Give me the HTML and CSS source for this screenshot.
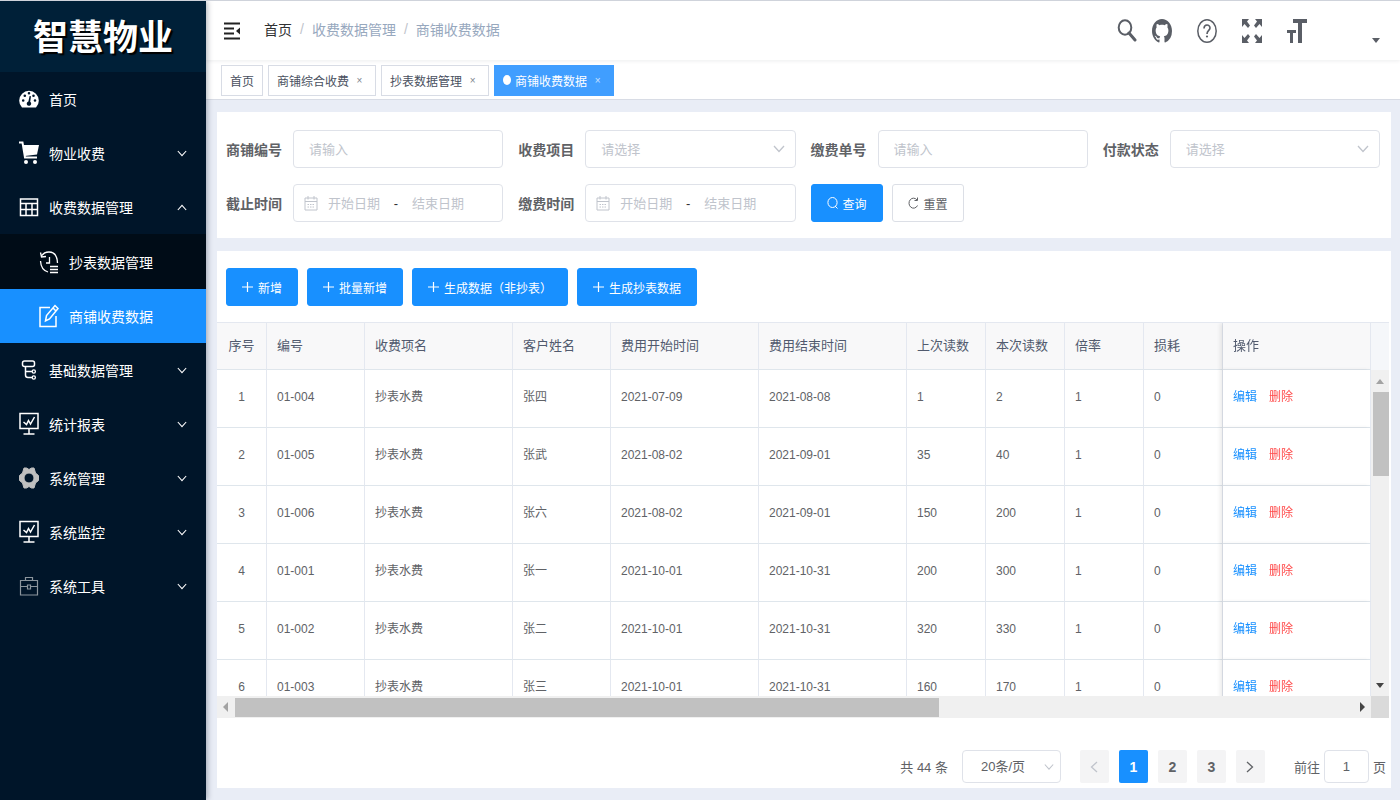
FILE: index.html
```html
<!DOCTYPE html>
<html lang="zh-CN">
<head>
  <meta charset="UTF-8">
  <meta name="viewport" content="width=device-width, initial-scale=1.0">
  <title>智慧物业 - 商铺收费数据</title>
  <link rel="stylesheet" href="styles.css">
</head>
<body>
  <!-- shared icons -->
  <svg class="sprite" aria-hidden="true">
    <symbol id="i-down" viewBox="0 0 12 8"><path d="M1 1l5 5.500L11 1" fill="none" stroke="currentColor" stroke-width="1.300"/></symbol>
    <symbol id="i-board" viewBox="0 0 20 24"><path d="M1 1.500h18v15H1zM10 16.500v5.500M4.500 22h11M4.500 10l3 2.500 2-4 2 3.500L15.500 5" fill="none" stroke="currentColor" stroke-width="1.500"/></symbol>
    <symbol id="i-plus" viewBox="0 0 11 12"><path d="M5.500 1v10M0 6h11" stroke="currentColor" stroke-width="1.200"/></symbol>
    <symbol id="i-date" viewBox="0 0 14 16"><path d="M1 3h12v12H1zM1 6.500h12M4 1v3.500M10 1v3.500" fill="none" stroke="currentColor"/><path d="M3.500 9.500h7M3.500 12h7" stroke="currentColor" stroke-dasharray="1.500 1"/></symbol>
  </svg>

  <div class="app">
    <aside class="sidebar">
      <h1 class="logo">智慧物业</h1>
      <nav>
        <ul class="menu">
          <li><a class="menu-item" href="#">
            <svg class="icon" viewBox="0 0 20 20"><path fill="currentColor" fill-rule="evenodd" d="M3 18.500A9.800 9.800 0 1 1 17 18.500zM4.200 10.200a1.300 1.300 0 1 0 0 2.600 1.300 1.300 0 0 0 0-2.600zM5.800 5.500a1.300 1.300 0 1 0 0 2.600 1.300 1.300 0 0 0 0-2.600zM10 3a1.300 1.300 0 1 0 0 2.600A1.300 1.300 0 0 0 10 3zM14.500 5.500a1.300 1.300 0 1 0 0 2.600 1.300 1.300 0 0 0 0-2.600zM16 10.200a1.300 1.300 0 1 0 0 2.600 1.300 1.300 0 0 0 0-2.600zM10.600 7l-1.200 5.500a2.200 2.200 0 1 0 1.800.300L12 7.300z"/></svg>
            <span>首页</span></a></li>
          <li><a class="menu-item" href="#">
            <svg class="icon" viewBox="0 0 20 24"><path d="M0 1.500h3.500L6 16.500h12" fill="none" stroke="currentColor" stroke-width="2"/><path d="M4 4h16l-2 9.500L6 15z" fill="currentColor"/><circle cx="7" cy="21" r="2" fill="currentColor"/><circle cx="16" cy="21" r="2" fill="currentColor"/></svg>
            <span>物业收费</span><svg class="arrow"><use href="#i-down"/></svg></a></li>
          <li>
            <a class="menu-item" href="#">
              <svg class="icon" viewBox="0 0 20 20"><path d="M1.500 2h17v16.500h-17zM1.500 6.500h17M1.500 12.500h17M7 6.500v12M13 6.500v12" fill="none" stroke="currentColor" stroke-width="1.500"/></svg>
              <span>收费数据管理</span><svg class="arrow up"><use href="#i-down"/></svg></a>
            <ul class="submenu">
              <li><a class="menu-item" href="#">
                <svg class="icon" viewBox="0 0 20 24"><path d="M2.500 6Q5 2 10 2q8 0 8.500 11M1.500 11Q2 20 9 22M1.500 2.500l1 4.500 4.500-.5M10.500 7v6H7M11 16.500h8M11 19.500h8M11 22.500h8" fill="none" stroke="currentColor" stroke-width="1.300"/></svg>
                <span>抄表数据管理</span></a></li>
              <li><a class="menu-item active" href="#">
                <svg class="icon" viewBox="0 0 20 24"><path d="M11 3.500H1v19h16V12M6.500 17l1-5.500 8.500-10 3 3-8.500 10.500zM14 4l3 3" fill="none" stroke="currentColor" stroke-width="1.500"/></svg>
                <span>商铺收费数据</span></a></li>
            </ul>
          </li>
          <li><a class="menu-item" href="#">
            <svg class="icon" viewBox="0 0 20 20"><rect x="3.500" y="1" width="12" height="5.500" rx="2" fill="none" stroke="currentColor" stroke-width="1.500"/><path d="M6.500 6.500V15q0 2.500 2.500 2.500h4M6.500 11.500h6.500" fill="none" stroke="currentColor" stroke-width="1.500"/><circle cx="14.800" cy="11.500" r="1.600" fill="none" stroke="currentColor" stroke-width="1.300"/><circle cx="14.800" cy="17.500" r="1.600" fill="none" stroke="currentColor" stroke-width="1.300"/></svg>
            <span>基础数据管理</span><svg class="arrow"><use href="#i-down"/></svg></a></li>
          <li><a class="menu-item" href="#">
            <svg class="icon"><use href="#i-board"/></svg>
            <span>统计报表</span><svg class="arrow"><use href="#i-down"/></svg></a></li>
          <li><a class="menu-item" href="#">
            <svg class="icon gray" viewBox="0 0 20 22"><path fill="currentColor" fill-rule="evenodd" stroke="currentColor" stroke-linejoin="round" d="M5 1h2.500l2.500 1.500L12.500 1H15l1.500 5L19.500 8.500v5L16.500 16 15 21h-2.500L10 19.500 7.500 21H5l-1.500-5L.5 13.500v-5L3.500 6zM10 6a5 5 0 1 0 0 10 5 5 0 0 0 0-10z"/></svg>
            <span>系统管理</span><svg class="arrow"><use href="#i-down"/></svg></a></li>
          <li><a class="menu-item" href="#">
            <svg class="icon"><use href="#i-board"/></svg>
            <span>系统监控</span><svg class="arrow"><use href="#i-down"/></svg></a></li>
          <li><a class="menu-item" href="#">
            <svg class="icon dim" viewBox="0 0 20 20"><path d="M1.500 4.500h17v14.500h-17zM6.500 4.500V1.500h7v3M1.500 10.500H8M12 10.500h6.500M8.500 9h3v4h-3z" fill="none" stroke="currentColor" stroke-width="1.200"/></svg>
            <span>系统工具</span><svg class="arrow"><use href="#i-down"/></svg></a></li>
        </ul>
      </nav>
    </aside>

    <div class="main">
      <header class="navbar">
        <button class="nav-btn fold" aria-label="收起菜单">
          <svg viewBox="0 0 16 18" width="16" height="18"><path d="M0 1.500h16M0 6.500h10M0 11.500h10M0 16.500h16" stroke="currentColor" stroke-width="2"/><path d="M16 5.500v7L12 9z" fill="currentColor"/></svg>
        </button>
        <nav class="breadcrumb">
          <a href="#">首页</a><span class="sep">/</span><span>收费数据管理</span><span class="sep">/</span><span>商铺收费数据</span>
        </nav>
        <div class="tools">
          <button class="nav-btn search" aria-label="搜索">
            <svg viewBox="0 0 20 24"><ellipse cx="8" cy="8.500" rx="6.300" ry="7.300" fill="none" stroke="currentColor" stroke-width="2"/><path d="M12 14l6 7" stroke="currentColor" stroke-width="3" stroke-linecap="round"/></svg>
          </button>
          <button class="nav-btn" aria-label="源码">
            <svg viewBox="0 0 16 16" preserveAspectRatio="none"><path fill="currentColor" d="M8 0C3.580 0 0 3.580 0 8c0 3.540 2.290 6.530 5.470 7.590.4.070.55-.17.55-.38 0-.19-.01-.82-.01-1.490-2.010.37-2.530-.49-2.690-.94-.09-.23-.48-.94-.82-1.130-.28-.15-.68-.52-.01-.53.63-.01 1.080.58 1.230.82.72 1.210 1.870.87 2.330.66.07-.52.28-.87.51-1.070-1.780-.2-3.640-.89-3.640-3.950 0-.87.31-1.590.82-2.150-.08-.2-.36-1.020.08-2.120 0 0 .67-.21 2.200.82.64-.18 1.320-.27 2-.27s1.360.09 2 .27c1.530-1.040 2.200-.82 2.200-.82.44 1.100.16 1.920.08 2.120.51.56.82 1.270.82 2.150 0 3.070-1.870 3.750-3.650 3.950.29.25.54.73.54 1.480 0 1.070-.01 1.930-.01 2.200 0 .21.15.46.55.38A8.010 8.010 0 0 0 16 8c0-4.420-3.580-8-8-8z"/></svg>
          </button>
          <button class="nav-btn" aria-label="帮助">
            <svg viewBox="0 0 20 24"><ellipse cx="10" cy="12" rx="9.200" ry="11.200" fill="none" stroke="currentColor" stroke-width="1.500"/><path d="M7 9.500C7 5 13 5 13 9c0 2.500-3 2.500-3 6" fill="none" stroke="currentColor" stroke-width="1.600"/><circle cx="10" cy="17.500" r="1.100" fill="currentColor"/></svg>
          </button>
          <button class="nav-btn" aria-label="全屏">
            <svg viewBox="0 0 20 24"><path fill="currentColor" d="M0 0h7L5 2.500l3 4L6 9 2.500 5 0 8zM20 0h-7l2 2.500-3 4L14 9l3.500-4L20 8zM0 24h7l-2-2.500 3-4L6 15l-3.500 4L0 16zM20 24h-7l2-2.500-3-4L14 15l3.500 4 2.500-3z"/></svg>
          </button>
          <button class="nav-btn" aria-label="字号">
            <svg viewBox="0 0 20 24"><path fill="currentColor" d="M6 0h14v4h-5v20h-4V4H6zM0 11h9v3H6v10H3V14H0z"/></svg>
          </button>
          <button class="nav-btn caret" aria-label="用户菜单">
            <svg viewBox="0 0 8 5"><path fill="currentColor" d="M0 0h8L4 5z"/></svg>
          </button>
        </div>
      </header>

      <div class="tags">
        <a class="tag" href="#">首页</a>
        <a class="tag" href="#">商铺综合收费<span class="close">×</span></a>
        <a class="tag" href="#">抄表数据管理<span class="close">×</span></a>
        <a class="tag active" href="#">商铺收费数据<span class="close">×</span></a>
      </div>

      <main class="content">
        <form class="card filter">
          <div class="field">
            <label for="shop">商铺编号</label>
            <input class="box" type="text" id="shop" placeholder="请输入">
          </div>
          <div class="field">
            <label for="item">收费项目</label>
            <div class="select">
              <select class="box" id="item"><option>请选择</option></select>
              <svg><use href="#i-down"/></svg>
            </div>
          </div>
          <div class="field">
            <label for="bill">缴费单号</label>
            <input class="box" type="text" id="bill" placeholder="请输入">
          </div>
          <div class="field">
            <label for="status">付款状态</label>
            <div class="select">
              <select class="box" id="status"><option>请选择</option></select>
              <svg><use href="#i-down"/></svg>
            </div>
          </div>
          <div class="field">
            <label for="end-from">截止时间</label>
            <div class="box range">
              <svg><use href="#i-date"/></svg>
              <input type="text" id="end-from" placeholder="开始日期">
              <span>-</span>
              <input type="text" aria-label="截止时间结束" placeholder="结束日期">
            </div>
          </div>
          <div class="field">
            <label for="pay-from">缴费时间</label>
            <div class="box range">
              <svg><use href="#i-date"/></svg>
              <input type="text" id="pay-from" placeholder="开始日期">
              <span>-</span>
              <input type="text" aria-label="缴费时间结束" placeholder="结束日期">
            </div>
          </div>
          <div class="actions">
            <button type="button" class="btn primary"><svg viewBox="0 0 11 12"><ellipse cx="5.500" cy="5.500" rx="4.600" ry="5" fill="none" stroke="currentColor"/><path d="M8 9l2.500 2.500" stroke="currentColor"/></svg>查询</button>
            <button type="button" class="btn"><svg viewBox="0 0 11 12"><path d="M9.500 8.500A4.500 5 0 1 1 9 3M9.500.5v3H6.500" fill="none" stroke="currentColor"/></svg>重置</button>
          </div>
        </form>

        <section class="card">
          <div class="toolbar">
            <button class="btn primary"><svg><use href="#i-plus"/></svg>新增</button>
            <button class="btn primary"><svg><use href="#i-plus"/></svg>批量新增</button>
            <button class="btn primary"><svg><use href="#i-plus"/></svg>生成数据（非抄表）</button>
            <button class="btn primary"><svg><use href="#i-plus"/></svg>生成抄表数据</button>
          </div>

          <div class="table-wrap">
            <div class="table-view">
              <table>
                <colgroup>
                  <col class="w-no"><col class="w-code"><col class="w-long"><col class="w-code"><col class="w-long"><col class="w-long">
                  <col class="w-num"><col class="w-num"><col class="w-num"><col class="w-num"><col class="w-long">
                </colgroup>
                <thead>
                  <tr><th>序号</th><th>编号</th><th>收费项名</th><th>客户姓名</th><th>费用开始时间</th><th>费用结束时间</th><th>上次读数</th><th>本次读数</th><th>倍率</th><th>损耗</th><th>操作</th></tr>
                </thead>
                <tbody>
                  <tr><td>1</td><td>01-004</td><td>抄表水费</td><td>张四</td><td>2021-07-09</td><td>2021-08-08</td><td>1</td><td>2</td><td>1</td><td>0</td><td><button class="link">编辑</button><button class="link danger">删除</button></td></tr>
                  <tr><td>2</td><td>01-005</td><td>抄表水费</td><td>张武</td><td>2021-08-02</td><td>2021-09-01</td><td>35</td><td>40</td><td>1</td><td>0</td><td><button class="link">编辑</button><button class="link danger">删除</button></td></tr>
                  <tr><td>3</td><td>01-006</td><td>抄表水费</td><td>张六</td><td>2021-08-02</td><td>2021-09-01</td><td>150</td><td>200</td><td>1</td><td>0</td><td><button class="link">编辑</button><button class="link danger">删除</button></td></tr>
                  <tr><td>4</td><td>01-001</td><td>抄表水费</td><td>张一</td><td>2021-10-01</td><td>2021-10-31</td><td>200</td><td>300</td><td>1</td><td>0</td><td><button class="link">编辑</button><button class="link danger">删除</button></td></tr>
                  <tr><td>5</td><td>01-002</td><td>抄表水费</td><td>张二</td><td>2021-10-01</td><td>2021-10-31</td><td>320</td><td>330</td><td>1</td><td>0</td><td><button class="link">编辑</button><button class="link danger">删除</button></td></tr>
                  <tr><td>6</td><td>01-003</td><td>抄表水费</td><td>张三</td><td>2021-10-01</td><td>2021-10-31</td><td>160</td><td>170</td><td>1</td><td>0</td><td><button class="link">编辑</button><button class="link danger">删除</button></td></tr>
                </tbody>
              </table>
            </div>
            <div class="gutter">
              <div class="gutter-head"></div>
              <div class="vbar">
                <svg class="muted" viewBox="0 0 8 5"><path fill="currentColor" d="M0 5h8L4 0z"/></svg>
                <div class="vthumb"></div>
                <svg viewBox="0 0 8 5"><path fill="currentColor" d="M0 0h8L4 5z"/></svg>
              </div>
            </div>
            <div class="hbar">
              <svg class="muted" viewBox="0 0 5 10"><path fill="currentColor" d="M5 0v10L0 5z"/></svg>
              <div class="htrack"><div class="hthumb"></div></div>
              <svg viewBox="0 0 5 10"><path fill="currentColor" d="M0 0v10l5-5z"/></svg>
            </div>
            <div class="corner"></div>
          </div>

          <div class="pagination">
            <span>共 44 条</span>
            <div class="select size">
              <select class="box" aria-label="每页条数"><option>20条/页</option></select>
              <svg><use href="#i-down"/></svg>
            </div>
            <div class="pager">
              <button disabled aria-label="上一页"><svg class="prev"><use href="#i-down"/></svg></button>
              <button class="current">1</button>
              <button>2</button>
              <button>3</button>
              <button aria-label="下一页"><svg class="next"><use href="#i-down"/></svg></button>
            </div>
            <label class="jump">前往<input class="box" type="text" value="1">页</label>
          </div>
        </section>
      </main>
    </div>
  </div>
</body>
</html>
```

FILE: styles.css
```css
* { margin: 0; padding: 0; box-sizing: border-box; }
body { font-family: "Liberation Sans", "Noto Sans CJK SC", sans-serif; font-size: 13px; color: #606266; background: #e9edf6; border-top: 1px solid #cfd3db; }
button, input, select { font: inherit; color: inherit; }
button { cursor: pointer; }
ul { list-style: none; }
a { color: inherit; text-decoration: none; }
.sprite { position: absolute; width: 0; height: 0; }
.app { display: flex; min-height: calc(100vh - 1px); }

/* sidebar */
.sidebar { width: 206px; flex-shrink: 0; background: #001529; color: #fff; box-shadow: 1px 0 6px rgba(0,21,41,0.35); z-index: 1; }
.logo { height: 71px; line-height: 73px; text-align: center; font-size: 35px; font-weight: 700; background: #002038; text-shadow: 2px 2px 1px #000; }
.menu-item { display: flex; align-items: center; gap: 10px; height: 54px; padding: 0 19px; font-size: 14px; }
.menu-item .icon { width: 20px; height: 24px; flex-shrink: 0; }
.menu-item .gray { color: #bfbfbf; }
.menu-item .dim { color: #8c959d; }
.arrow { width: 10px; height: 7px; margin-left: auto; }
.arrow.up { transform: rotate(180deg); }
.submenu { background: #000c17; padding-top: 1px; }
.submenu .menu-item { padding-left: 39px; }
.menu-item.active { background: #1890ff; }

/* top bar */
.main { flex: 1; min-width: 0; }
.navbar { position: relative; display: flex; align-items: center; height: 59px; padding: 0 20px 0 18px; background: #fff; box-shadow: 0 1px 4px rgba(0,21,41,0.08); }
.nav-btn { display: flex; border: none; background: none; color: #5a5e66; }
.nav-btn.fold { color: #222; margin-right: 24px; }
.breadcrumb { display: flex; align-items: center; padding-bottom: 3px; font-size: 14px; color: #97a8be; }
.breadcrumb a { color: #303133; }
.breadcrumb .sep { margin: 0 8px; color: #c0c4cc; }
.tools { display: flex; align-items: center; gap: 25px; margin-left: auto; }
.tools svg { width: 20px; height: 24px; }
.tools .search { margin-right: -10px; }
.tools .caret { align-self: flex-end; margin-left: 40px; }
.tools .caret svg { width: 8px; height: 5px; }

.tags { display: flex; align-items: center; gap: 5px; height: 40px; padding: 1px 15px 0; background: #fff; border-bottom: 1px solid #d8dce5; }
.tag { display: flex; align-items: center; height: 31px; padding: 0 8px; font-size: 12px; color: #495060; background: #fff; border: 1px solid #d8dce5; }
.tag.active { color: #fff; background: #409eff; border-color: #409eff; }
.tag.active::before { content: ""; width: 8px; height: 10px; margin-right: 4px; border-radius: 50%; background: #fff; }
.close { width: 15px; margin-left: 3px; text-align: center; font-size: 10px; opacity: 0.7; }

/* content */
.content { display: flex; flex-direction: column; gap: 13px; padding: 12px 9px 11px 11px; }
.card { background: #fff; }
.filter { display: grid; grid-template-columns: repeat(4, 1fr); gap: 16px 15px; padding: 18px 11px 16px 9px; }
.field { display: flex; align-items: center; gap: 11px; }
.field > label { flex-shrink: 0; font-size: 14px; font-weight: 700; }
.box { width: 100%; min-width: 0; height: 38px; padding: 0 15px; border: 1px solid #dfe2e9; border-radius: 4px; background: #fff; outline: none; }
.box:focus { border-color: #1890ff; }
::placeholder { color: #c0c4cc; opacity: 1; }
.select { position: relative; flex: 1; min-width: 0; }
.select select { appearance: none; color: #c0c4cc; }
.select svg { position: absolute; right: 11px; top: 50%; width: 12px; height: 8px; margin-top: -4px; color: #c0c4cc; pointer-events: none; }
.range { display: flex; align-items: center; padding: 0 10px; }
.range svg { width: 14px; height: 16px; margin-right: 10px; flex-shrink: 0; color: #c0c4cc; }
.range input { width: 60px; border: none; outline: none; background: none; }
.range span { width: 24px; padding-right: 8px; text-align: center; color: #303133; }
.actions { display: flex; gap: 9px; }
.btn { display: flex; align-items: center; gap: 5px; height: 38px; padding: 0 15px; font-size: 12px; border: 1px solid #dcdfe6; border-radius: 3px; background: #fff; }
.btn svg { width: 11px; height: 12px; }
.btn.primary { color: #fff; background: #1890ff; border-color: #1890ff; }
.toolbar { display: flex; gap: 9px; padding: 17px 9px 16px; }

/* table */
.table-wrap { display: grid; grid-template-columns: 1fr 18px; margin-right: 2px; }
.table-view { height: 374px; overflow: hidden; border-top: 1px solid #e4e8f0; }
table { width: 100%; table-layout: fixed; border-collapse: separate; border-spacing: 0; }
th, td { padding: 0 10px 3px; text-align: left; white-space: nowrap; border-right: 1px solid #e4e8f0; border-bottom: 1px solid #dfe6ec; }
th { height: 47px; font-size: 13px; font-weight: 400; color: #515a6e; background: #f8f8f9; }
td { height: 58px; font-size: 12px; line-height: 14px; background: #fff; }
th:first-child, td:first-child { text-align: center; }
th:last-child, td:last-child { position: sticky; right: 0; box-shadow: -3px 0 4px rgba(0,0,0,0.08); }
.w-no { width: 50px; }
.w-code { width: 98px; }
.w-long { width: 148px; }
.w-num { width: 79px; }
.link { border: none; background: none; color: #1890ff; }
.link.danger { margin-left: 12px; color: #ff4949; }
.gutter { display: flex; flex-direction: column; }
.gutter-head { height: 48px; background: #f5f7fa; border-top: 1px solid #e4e8f0; }
.vbar { flex: 1; display: flex; flex-direction: column; align-items: center; padding: 9px 0 8px; background: #f0f0f0; }
.vbar svg { width: 8px; height: 5px; }
.vbar .muted, .hbar .muted { color: #a3a3a3; }
.vthumb { width: 16px; height: 84px; margin: 8px 0 auto 2px; background: #c1c1c1; }
.hbar { display: flex; align-items: center; gap: 7px; height: 22px; padding: 0 6px; background: #f0f0f0; }
.hbar svg { width: 5px; height: 10px; }
.hbar svg:last-child, .vbar svg:last-child { color: #444; }
.htrack { flex: 1; }
.hthumb { width: 63%; height: 19px; background: #c1c1c1; }
.corner { background: #dadada; }

/* pagination */
.pagination { display: flex; align-items: center; justify-content: flex-end; padding: 32px 5px 5px; }
.pagination .box { height: 33px; }
.size { flex: none; width: 99px; margin: 0 19px 0 14px; }
.size select { padding-left: 18px; color: #606266; }
.size svg { right: 7px; width: 10px; }
.pager { display: flex; gap: 10px; margin-right: 29px; }
.pager button { display: flex; align-items: center; justify-content: center; width: 29px; height: 33px; font-size: 14px; font-weight: 700; border: none; border-radius: 2px; background: #f4f4f5; }
.pager button:disabled { color: #c0c4cc; cursor: default; }
.pager .current { color: #fff; background: #1890ff; }
.pager svg { width: 12px; height: 8px; }
.prev { transform: rotate(90deg); }
.next { transform: rotate(-90deg); }
.jump { display: flex; align-items: center; gap: 4px; }
.jump .box { width: 45px; padding: 0 3px; text-align: center; }
```
